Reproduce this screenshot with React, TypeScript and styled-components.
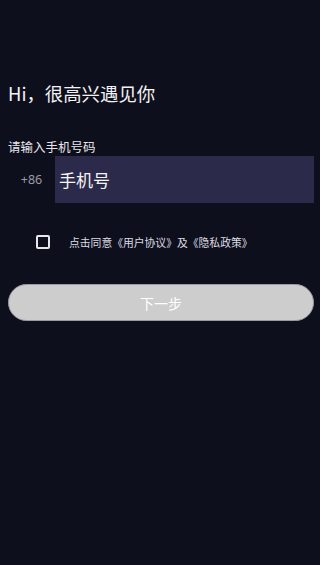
import * as React from 'react';
import styled, { createGlobalStyle } from 'styled-components';

const Global = createGlobalStyle`
  html, body { margin: 0; padding: 0; background: #0e0f1c; }
  body { font-family: "Noto Sans CJK SC", "Noto Sans", sans-serif; }
`;

const Page = styled.div`
  width: 320px;
  height: 565px;
  background: #0e0f1c;
  padding: 80px 6px 0 8px;
  box-sizing: border-box;
  display: flex;
  flex-direction: column;
`;

const Title = styled.h1`
  margin: 0;
  font-size: 18.4px;
  font-weight: 400;
  line-height: 26px;
  color: #f2f2f4;
`;

const Label = styled.div`
  margin-top: 32px;
  font-size: 12.5px;
  line-height: 18px;
  color: #e6e6ea;
`;

const PhoneRow = styled.div`
  display: flex;
  align-items: stretch;
  height: 47px;
`;

const Prefix = styled.span`
  width: 47px;
  display: flex;
  align-items: center;
  justify-content: center;
  font-size: 12.5px;
  color: #9a9aa6;
  font-family: "Noto Sans", sans-serif;
`;

const PhoneInput = styled.input`
  flex: 1;
  min-width: 0;
  border: none;
  outline: none;
  background: #2b2a4b;
  color: #fff;
  font-size: 17px;
  font-family: "Noto Sans CJK SC", "Noto Sans", sans-serif;
  padding: 0 4px;
  &::placeholder { color: #f4f4f6; }
`;

const AgreeRow = styled.label`
  display: flex;
  align-items: center;
  margin-top: 31px;
  padding-left: 28px;
  height: 16px;
`;

const Box = styled.span`
  width: 10px;
  height: 10px;
  border: 2px solid #e8e8ec;
  border-radius: 2px;
`;

const AgreeText = styled.span`
  margin-left: 19px;
  font-size: 10.8px;
  color: #dcdce2;
`;

const NextButton = styled.button`
  margin-top: 34px;
  height: 37px;
  border: 1px solid #9a9aa6;
  border-radius: 19px;
  background: #cdcdcd;
  color: #fff;
  font-size: 14px;
  font-family: "Noto Sans CJK SC", "Noto Sans", sans-serif;
`;

export default function App() {
  return (
    <Page>
      <Global />
      <Title>Hi，很高兴遇见你</Title>
      <Label>请输入手机号码</Label>
      <PhoneRow>
        <Prefix>+86</Prefix>
        <PhoneInput placeholder="手机号" />
      </PhoneRow>
      <AgreeRow>
        <Box />
        <AgreeText>点击同意《用户协议》及《隐私政策》</AgreeText>
      </AgreeRow>
      <NextButton>下一步</NextButton>
    </Page>
  );
}
